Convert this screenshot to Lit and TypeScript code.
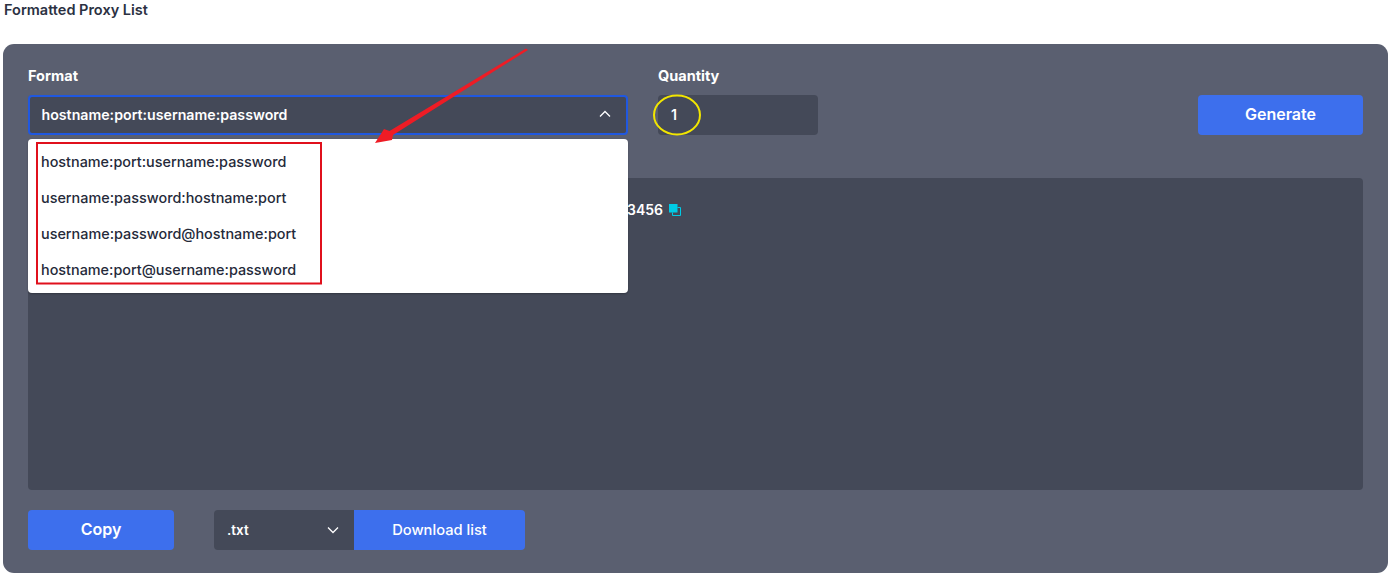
import { LitElement, html, css, svg } from 'lit';
import { customElement } from 'lit/decorators.js';

const FORMATS = [
  'hostname:port:username:password',
  'username:password:hostname:port',
  'username:password@hostname:port',
  'hostname:port@username:password',
];

@customElement('app-root')
export class AppRoot extends LitElement {
  static styles = css`
    :host {
      display: block;
      position: relative;
      width: 1393px;
      height: 577px;
      overflow: hidden;
      background: #fff;
      font-family: Inter, 'Noto Sans', sans-serif;
      box-sizing: border-box;
      padding: 0 5px 0 3px;
    }
    .title {
      height: 44px;
      padding: 2px 0 0 1px;
      box-sizing: border-box;
      font-size: 14.5px;
      line-height: 16px;
      font-weight: 600;
      color: #2b3142;
    }
    .panel {
      height: 529px;
      box-sizing: border-box;
      padding: 23px 25px;
      background: #5a5f70;
      border-radius: 11px;
      color: #fff;
    }
    .top {
      display: flex;
      height: 111px;
    }
    .label {
      height: 28px;
      font-size: 14.5px;
      line-height: 18px;
      font-weight: 700;
    }
    .format { width: 600px; position: relative; }
    .quantity { width: 160px; margin-left: 30px; }
    .field {
      display: flex;
      align-items: center;
      justify-content: space-between;
      height: 40px;
      box-sizing: border-box;
      padding: 0 13px 2px;
      background: #444958;
      border-radius: 4px;
      font-size: 14.2px;
      font-weight: 600;
    }
    .format .field { border: 2px solid #2058e0; padding: 0 15px 2px 11.5px; }
    .generate { width: 165px; margin: 28px 0 0 auto; font-size: 16.4px; }
    .btn {
      display: flex;
      align-items: center;
      justify-content: center;
      height: 40px;
      box-sizing: border-box;
      padding-bottom: 2px;
      background: #3d6fed;
      border-radius: 4px;
      font-size: 16px;
      font-weight: 600;
    }
    .menu {
      position: absolute;
      top: 72px;
      left: 0;
      width: 600px;
      height: 154px;
      box-sizing: border-box;
      padding: 5px 13px;
      background: #fff;
      border-radius: 4px;
      box-shadow: 0 1px 2px rgba(0, 0, 0, 0.25);
      color: #252a3a;
      font-size: 14.4px;
      font-weight: 500;
      z-index: 1;
    }
    .menu div { height: 36px; line-height: 36px; }
    .output {
      height: 312px;
      box-sizing: border-box;
      padding: 23px 13px;
      background: #444958;
      border-radius: 4px;
      font-size: 14px;
      line-height: 18px;
      font-weight: 600;
    }
    .line { display: flex; align-items: center; }
    .value { width: 622px; text-align: right; white-space: nowrap; }
    .copy-icon { margin: 0 0 0 6px; }
    .bottom {
      display: flex;
      margin-top: 20px;
    }
    .copy { width: 146px; }
    .ext {
      width: 140px;
      margin-left: 40px;
      font-size: 13.5px;
      border-radius: 4px 0 0 4px;
      padding: 0 15px 0 13px;
    }
    .download {
      width: 171px;
      padding-bottom: 0;
      font-size: 14.7px;
      font-weight: 500;
      border-radius: 0 4px 4px 0;
    }
    .overlay {
      position: absolute;
      inset: 0;
      z-index: 2;
      pointer-events: none;
    }
  `;

  private chevron(d: string) {
    return html`<svg width="12" height="8" viewBox="0 0 12 8" fill="none" stroke="#fff" stroke-width="1.3"><path d=${d}></path></svg>`;
  }

  private annotations() {
    return svg`
      <rect x="37" y="143" width="284" height="140.5" fill="none" stroke="#e0101c" stroke-width="2"></rect>
      <ellipse cx="677" cy="115" rx="23" ry="19.5" fill="none" stroke="#f2e600" stroke-width="2"></ellipse>
      <polygon points="526,48.5 528,50 393,135 392,140 375,143 384,129 389.5,131" fill="#ee1c25"></polygon>
    `;
  }

  render() {
    return html`
      <div class="title">Formatted Proxy List</div>
      <div class="panel">
        <div class="top">
          <div class="format">
            <div class="label">Format</div>
            <div class="field">
              <span>${FORMATS[0]}</span>
              ${this.chevron('M1 6.5 6 1.5 11 6.5')}
            </div>
            <div class="menu">
              ${FORMATS.map((item) => html`<div>${item}</div>`)}
            </div>
          </div>
          <div class="quantity">
            <div class="label">Quantity</div>
            <div class="field">1</div>
          </div>
          <div class="btn generate">Generate</div>
        </div>
        <div class="output">
          <div class="line">
            <span class="value">hostname:8080:username:password123456</span>
            <svg class="copy-icon" width="12" height="12" viewBox="0 0 12 12">
              <rect x="0" y="0" width="8.5" height="8.5" fill="#00cbe6"></rect>
              <path d="M3.5 8.5V11.5H11.5V3.5H8.5" fill="none" stroke="#00cbe6"></path>
            </svg>
          </div>
        </div>
        <div class="bottom">
          <div class="btn copy">Copy</div>
          <div class="field ext">
            <span>.txt</span>
            ${this.chevron('M1 1.5 6 6.5 11 1.5')}
          </div>
          <div class="btn download">Download list</div>
        </div>
      </div>
      <svg class="overlay" width="1393" height="577" viewBox="0 0 1393 577">
        ${this.annotations()}
      </svg>
    `;
  }
}
